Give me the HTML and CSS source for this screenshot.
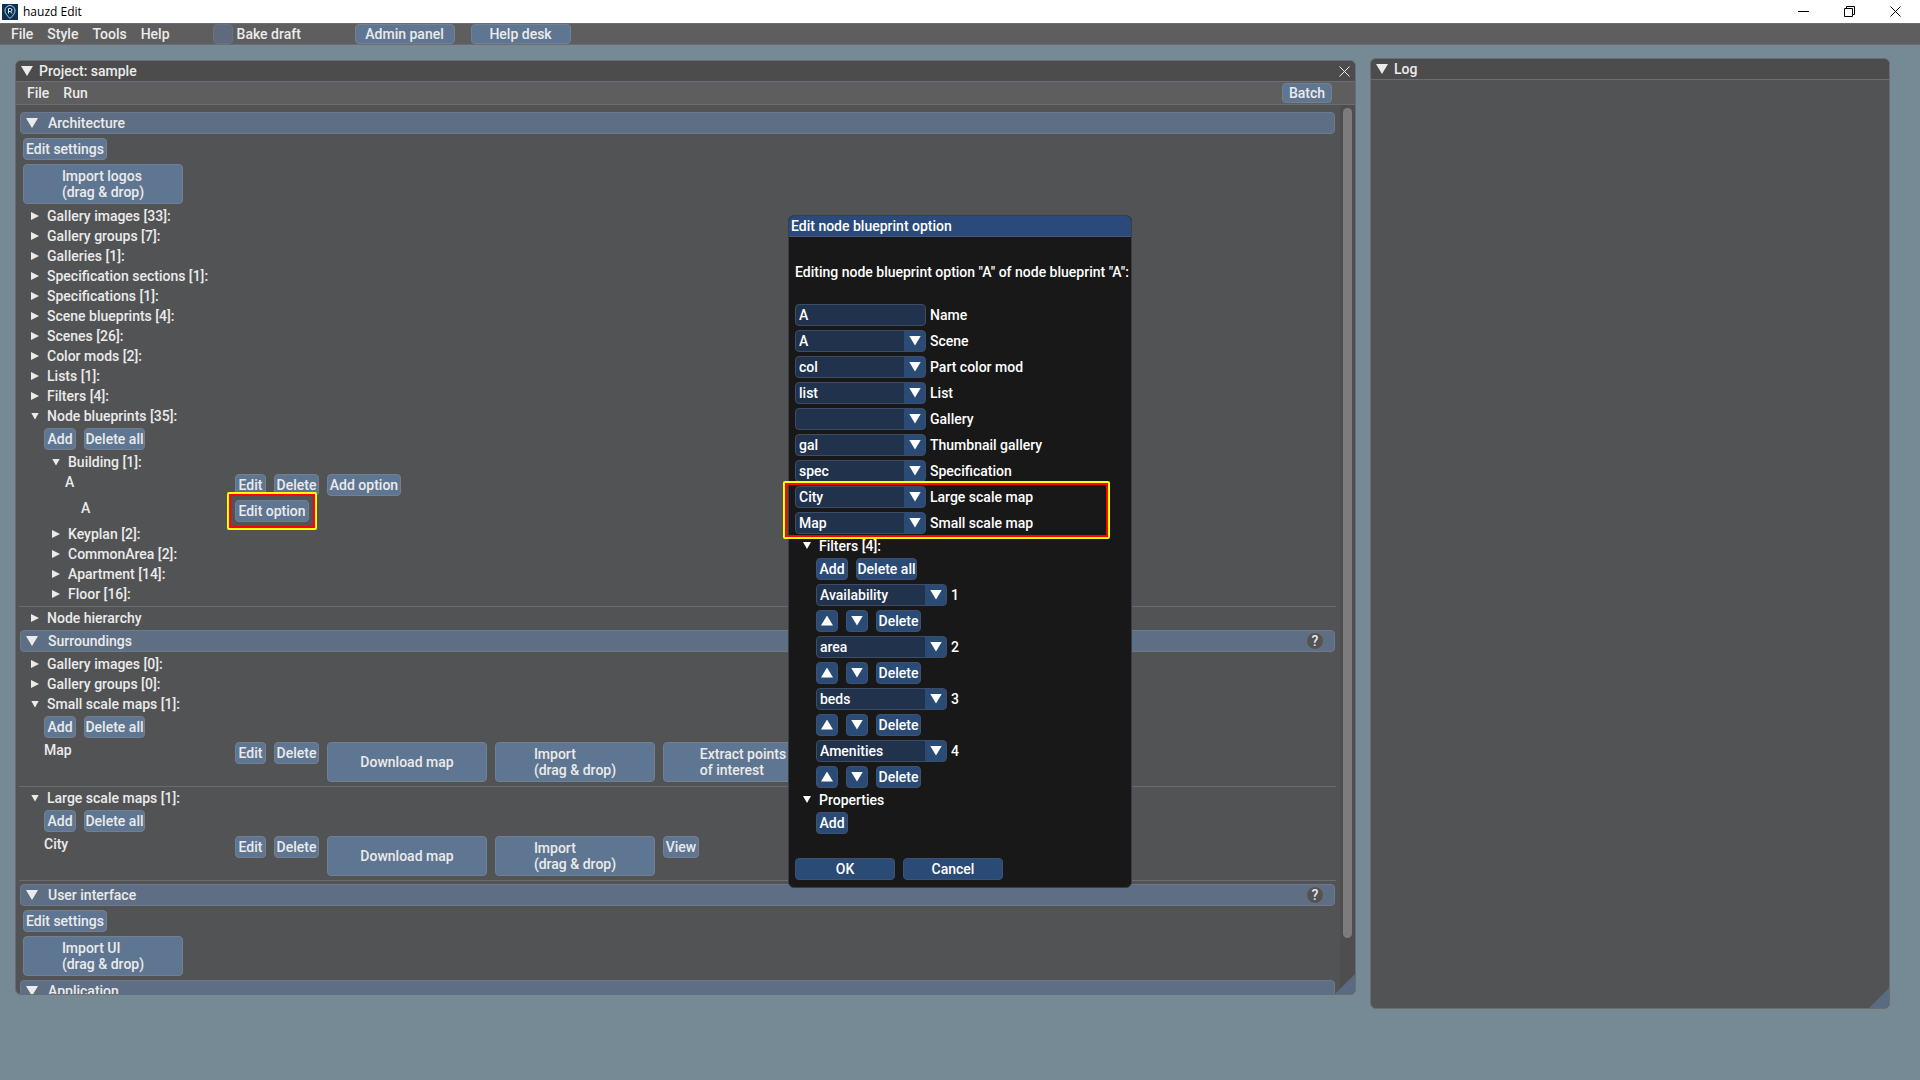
FILE: index.html
```html
<!DOCTYPE html>
<html lang="en">
<head>
<meta charset="utf-8">
<title>hauzd Edit</title>
<link rel="stylesheet" href="styles.css">
</head>
<body>
<header class="titlebar">
  <svg class="app-icon" viewBox="0 0 16 16" aria-hidden="true"><rect width="16" height="16" fill="#0b3155"/><path d="M8 14.500C5 11.500 3 9.500 3 6.500a5 5 0 0 1 10 0c0 3-2 5-5 8z" fill="none" stroke="#b9d3e4"/><path d="M6.500 9.500v-5h2a1.500 1.500 0 0 1 0 3h-2M8.500 7.500l1.500 2" fill="none" stroke="#dbe9f2"/></svg>
  <h1 class="app-name">hauzd Edit</h1>
  <div class="window-controls">
    <button class="window-control" aria-label="Minimize"><svg viewBox="0 0 11 11"><path d="M0 5.500h11"/></svg></button>
    <button class="window-control" aria-label="Restore"><svg viewBox="0 0 11 11"><path d="M.5 2.500h8v8h-8zM2.500 2.500v-2h8v8h-2"/></svg></button>
    <button class="window-control" aria-label="Close"><svg viewBox="0 0 11 11"><path d="M.5.5l10 10M10.500.5l-10 10"/></svg></button>
  </div>
</header>
<nav class="menubar">
  <button class="menu">File</button>
  <button class="menu">Style</button>
  <button class="menu">Tools</button>
  <button class="menu">Help</button>
  <label class="check"><input type="checkbox">Bake draft</label>
  <button class="btn bar-btn">Admin panel</button>
  <button class="btn bar-btn">Help desk</button>
</nav>
<main class="desktop">
  <section class="window project">
    <div class="window-title"><span class="arrow down"></span><h2>Project: sample</h2>
      <button class="close" aria-label="Close project"><svg viewBox="0 0 11 11"><path d="M.5.5l10 10M10.500.5l-10 10"/></svg></button>
    </div>
    <div class="window-menu">
      <button class="menu">File</button>
      <button class="menu">Run</button>
      <button class="btn batch">Batch</button>
    </div>
    <div class="scroll-area">
      <div class="content">
        <details class="section" open>
          <summary class="section-head"><span class="arrow down"></span>Architecture</summary>
          <div class="stack">
            <div class="row"><button class="btn settings">Edit settings</button></div>
            <div class="row"><button class="btn big"><span>Import logos<br>(drag &amp; drop)</span></button></div>
            <details><summary class="node">Gallery images [33]:</summary></details>
            <details><summary class="node">Gallery groups [7]:</summary></details>
            <details><summary class="node">Galleries [1]:</summary></details>
            <details><summary class="node">Specification sections [1]:</summary></details>
            <details><summary class="node">Specifications [1]:</summary></details>
            <details><summary class="node">Scene blueprints [4]:</summary></details>
            <details><summary class="node">Scenes [26]:</summary></details>
            <details><summary class="node">Color mods [2]:</summary></details>
            <details><summary class="node">Lists [1]:</summary></details>
            <details><summary class="node">Filters [4]:</summary></details>
            <details open><summary class="node">Node blueprints [35]:</summary>
              <div class="stack nested">
                <div class="row"><button class="btn add">Add</button><button class="btn delete-all">Delete all</button></div>
                <details open><summary class="node">Building [1]:</summary>
                  <div class="stack nested">
                    <div class="item"><span class="item-name">A</span><button class="btn edit">Edit</button><button class="btn delete">Delete</button><button class="btn option-btn">Add option</button></div>
                    <div class="item option"><span class="item-name">A</span><div class="marked"><button class="btn option-btn">Edit option</button></div></div>
                  </div>
                </details>
                <details><summary class="node">Keyplan [2]:</summary></details>
                <details><summary class="node">CommonArea [2]:</summary></details>
                <details><summary class="node">Apartment [14]:</summary></details>
                <details><summary class="node">Floor [16]:</summary></details>
              </div>
            </details>
            <hr>
            <details><summary class="node">Node hierarchy</summary></details>
          </div>
        </details>
        <details class="section" open>
          <summary class="section-head"><span class="arrow down"></span>Surroundings<button class="help" aria-label="About surroundings">?</button></summary>
          <div class="stack">
            <details><summary class="node">Gallery images [0]:</summary></details>
            <details><summary class="node">Gallery groups [0]:</summary></details>
            <details open><summary class="node">Small scale maps [1]:</summary>
              <div class="stack nested">
                <div class="row"><button class="btn add">Add</button><button class="btn delete-all">Delete all</button></div>
                <div class="item"><span class="item-name">Map</span><button class="btn edit">Edit</button><button class="btn delete">Delete</button><button class="btn big">Download map</button><button class="btn big"><span>Import<br>(drag &amp; drop)</span></button><button class="btn big"><span>Extract points<br>of interest</span></button></div>
              </div>
            </details>
            <hr>
            <details open><summary class="node">Large scale maps [1]:</summary>
              <div class="stack nested">
                <div class="row"><button class="btn add">Add</button><button class="btn delete-all">Delete all</button></div>
                <div class="item"><span class="item-name">City</span><button class="btn edit">Edit</button><button class="btn delete">Delete</button><button class="btn big">Download map</button><button class="btn big"><span>Import<br>(drag &amp; drop)</span></button><button class="btn view">View</button></div>
              </div>
            </details>
            <hr>
          </div>
        </details>
        <details class="section" open>
          <summary class="section-head"><span class="arrow down"></span>User interface<button class="help" aria-label="About user interface">?</button></summary>
          <div class="stack">
            <div class="row"><button class="btn settings">Edit settings</button></div>
            <div class="row"><button class="btn big"><span>Import UI<br>(drag &amp; drop)</span></button></div>
          </div>
        </details>
        <details class="section" open>
          <summary class="section-head"><span class="arrow down"></span>Application</summary>
        </details>
      </div>
      <div class="track"><div class="thumb"></div></div>
    </div>
    <span class="grip"></span>
  </section>
  <section class="window log">
    <div class="window-title"><span class="arrow down"></span><h2>Log</h2></div>
    <span class="grip"></span>
  </section>
</main>
<div class="overlay">
  <form class="dialog" role="dialog" aria-labelledby="dialog-title">
    <h2 class="dialog-title" id="dialog-title">Edit node blueprint option</h2>
    <div class="dialog-body">
      <p class="intro">Editing node blueprint option "A" of node blueprint "A":</p>
      <div class="field"><input class="text" id="name" value="A"><label for="name">Name</label></div>
      <div class="field"><div class="combo"><select id="scene"><option>A</option></select></div><label for="scene">Scene</label></div>
      <div class="field"><div class="combo"><select id="mod"><option>col</option></select></div><label for="mod">Part color mod</label></div>
      <div class="field"><div class="combo"><select id="list"><option>list</option></select></div><label for="list">List</label></div>
      <div class="field"><div class="combo"><select id="gallery"><option></option></select></div><label for="gallery">Gallery</label></div>
      <div class="field"><div class="combo"><select id="thumb"><option>gal</option></select></div><label for="thumb">Thumbnail gallery</label></div>
      <div class="field"><div class="combo"><select id="spec"><option>spec</option></select></div><label for="spec">Specification</label></div>
      <div class="stack marked maps">
        <div class="field"><div class="combo"><select id="large"><option>City</option></select></div><label for="large">Large scale map</label></div>
        <div class="field"><div class="combo"><select id="small"><option>Map</option></select></div><label for="small">Small scale map</label></div>
      </div>
      <details open><summary class="node">Filters [4]:</summary>
        <div class="stack nested">
          <div class="row"><button type="button" class="btn add">Add</button><button type="button" class="btn delete-all">Delete all</button></div>
          <div class="field"><div class="combo"><select id="f1"><option>Availability</option></select></div><label for="f1">1</label></div>
          <div class="row"><button type="button" class="btn move" aria-label="Move up"><span class="arrow up"></span></button><button type="button" class="btn move" aria-label="Move down"><span class="arrow down"></span></button><button type="button" class="btn delete">Delete</button></div>
          <div class="field"><div class="combo"><select id="f2"><option>area</option></select></div><label for="f2">2</label></div>
          <div class="row"><button type="button" class="btn move" aria-label="Move up"><span class="arrow up"></span></button><button type="button" class="btn move" aria-label="Move down"><span class="arrow down"></span></button><button type="button" class="btn delete">Delete</button></div>
          <div class="field"><div class="combo"><select id="f3"><option>beds</option></select></div><label for="f3">3</label></div>
          <div class="row"><button type="button" class="btn move" aria-label="Move up"><span class="arrow up"></span></button><button type="button" class="btn move" aria-label="Move down"><span class="arrow down"></span></button><button type="button" class="btn delete">Delete</button></div>
          <div class="field"><div class="combo"><select id="f4"><option>Amenities</option></select></div><label for="f4">4</label></div>
          <div class="row"><button type="button" class="btn move" aria-label="Move up"><span class="arrow up"></span></button><button type="button" class="btn move" aria-label="Move down"><span class="arrow down"></span></button><button type="button" class="btn delete">Delete</button></div>
        </div>
      </details>
      <details open><summary class="node">Properties</summary>
        <div class="stack nested"><div class="row"><button type="button" class="btn add">Add</button></div></div>
      </details>
      <div class="row actions"><button type="button" class="btn">OK</button><button type="button" class="btn">Cancel</button></div>
    </div>
  </form>
</div>
</body>
</html>
```

FILE: styles.css
```css
:root {
  --desk: #758a94;
  --window: #525355;
  --title: #4c4c4c;
  --bar: #5e5e5e;
  --line: #6c6c74;
  --btn: #5f7692;
  --btn-line: #74808f;
  --head: #5e6e84;
  --text: #ebebeb;
}

* { box-sizing: border-box; }

body {
  margin: 0;
  height: 100vh;
  display: flex;
  flex-direction: column;
  overflow: hidden;
  background: var(--desk);
  color: var(--text);
  font: 500 14px/16px Roboto, sans-serif;
}

h1, h2, p { margin: 0; font: inherit; }

button, input, select { font: inherit; color: inherit; }

button { cursor: pointer; white-space: nowrap; }

summary { list-style: none; cursor: pointer; }

/* Application title bar */
.titlebar {
  display: flex;
  align-items: center;
  height: 23px;
  padding: 0 2px;
  background: #fff;
  color: #000;
}

.app-icon { width: 16px; height: 16px; }

.app-name { margin-left: 5px; font: 400 12px/16px "Open Sans", sans-serif; }

.window-controls { display: flex; margin-left: auto; }

.window-control {
  display: grid;
  place-items: center;
  width: 46px;
  height: 20px;
  padding: 0;
  border: 0;
  background: none;
}

.window-control svg, .close svg {
  width: 11px;
  height: 11px;
  fill: none;
  stroke: #000;
}

/* Menus */
.menubar {
  display: flex;
  align-items: center;
  height: 22px;
  padding-left: 11px;
  border: solid var(--line);
  border-width: 1px 0;
  background: var(--bar);
}

.menu {
  margin-right: 14px;
  padding: 0;
  border: 0;
  background: none;
}

.check {
  display: flex;
  align-items: center;
  gap: 4px;
  width: 142px;
  margin-left: 29px;
}

.check input {
  appearance: none;
  width: 20px;
  height: 20px;
  margin: 0;
  border: 1px solid #6a7180;
  border-radius: 4px;
  background: #5f6a7e;
}

.btn {
  height: 22px;
  padding: 0;
  border: 1px solid var(--btn-line);
  border-radius: 4px;
  background: var(--btn);
}

.bar-btn { width: 100px; height: 20px; margin-right: 16px; }

.add { width: 32px; }

.edit { width: 31px; }

.view { width: 36px; }

.delete { width: 45px; }

.delete-all { width: 61px; }

.option-btn { width: 74px; }

.settings { width: 84px; }

.big {
  display: grid;
  place-items: center;
  width: 160px;
  height: 40px;
  text-align: left;
}

/* Windows */
.desktop {
  flex: 1;
  min-height: 0;
  display: grid;
  grid-template-columns: 1341fr 520fr;
  gap: 14px;
  padding: 13px 30px 71px 15px;
}

.window {
  position: relative;
  display: flex;
  flex-direction: column;
  min-height: 0;
  border: 1px solid var(--line);
  border-radius: 6px;
  background: var(--window);
  overflow: hidden;
}

.project { margin: 2px 0 14px; }

.window-title {
  display: flex;
  align-items: center;
  flex: none;
  gap: 6px;
  height: 21px;
  padding: 0 5px;
  border-bottom: 1px solid var(--line);
  background: var(--title);
}

.close {
  margin-left: auto;
  padding: 0;
  border: 0;
  background: none;
  line-height: 0;
}

.close svg { stroke: var(--text); }

.window-menu {
  display: flex;
  align-items: center;
  flex: none;
  height: 23px;
  padding: 0 23px 0 11px;
  border-bottom: 1px solid var(--line);
  background: var(--bar);
}

.batch { width: 50px; height: 20px; margin-left: auto; }

.scroll-area { display: flex; flex: 1; min-height: 0; }

.content {
  flex: 1;
  display: flex;
  flex-direction: column;
  gap: 4px;
  padding: 7px 5px 0 4px;
  overflow: auto;
  scrollbar-width: none;
}

.track {
  width: 15px;
  padding: 3px 3px 56px;
  background: #4e4e4f;
}

.thumb { height: 100%; border-radius: 5px; background: #7c7c7c; }

.grip {
  position: absolute;
  right: 0;
  bottom: 0;
  width: 20px;
  height: 20px;
  background: #596b80;
  clip-path: polygon(100% 0, 100% 100%, 0 100%);
}

/* Arrows */
.arrow { flex: none; width: 12px; height: 10px; background: currentColor; }

.down { clip-path: polygon(0 0, 100% 0, 50% 100%); }

.up { clip-path: polygon(50% 0, 100% 100%, 0 100%); }

/* Sections and tree */
.section-head {
  display: flex;
  align-items: center;
  gap: 10px;
  height: 22px;
  padding: 0 10px 0 5px;
  border: 1px solid #6d7a8d;
  border-radius: 4px;
  background: var(--head);
}

.help {
  width: 18px;
  height: 18px;
  margin-left: auto;
  padding: 0;
  border: 1px solid #6d7078;
  border-radius: 9px;
  background: #525355;
  line-height: 16px;
}

.stack { display: flex; flex-direction: column; gap: 4px; }

.section > .stack { margin-top: 4px; padding-left: 3px; }

.nested { margin-top: 4px; padding-left: 21px; }

.node { display: flex; align-items: center; gap: 8px; padding-left: 8px; }

.node::before {
  content: "";
  width: 8px;
  height: 8px;
  background: currentColor;
  clip-path: polygon(0 0, 100% 50%, 0 100%);
}

details[open] > .node::before {
  height: 7px;
  clip-path: polygon(0 0, 100% 0, 50% 100%);
}

.row { display: flex; gap: 8px; }

.item { display: flex; align-items: flex-start; gap: 8px; }

.item-name { width: 183px; }

.nested .nested .item-name { width: 162px; }

.option { padding-left: 16px; }

.nested .nested .option .item-name { width: 146px; }

hr {
  width: calc(100% + 5px);
  height: 1px;
  margin: 0 0 -1px -4px;
  border: 0;
  background: #6c6c70;
}

/* Marker drawn round the controls being pointed out */
.marked { position: relative; }

.marked::after {
  content: "";
  position: absolute;
  inset: -8px;
  border: 2px solid #ff0;
  border-radius: 2px;
  box-shadow: inset 0 0 0 2px #f00;
  pointer-events: none;
}

/* Dialog */
.overlay {
  position: absolute;
  inset: 22px 0 0;
  display: grid;
  place-items: center;
}

.dialog {
  --btn: #294b75;
  --btn-line: #3f5170;
  width: 344px;
  border: 1px solid #3c3c44;
  border-radius: 6px;
  background: #181818;
  color: #fff;
}

.dialog-title {
  height: 21px;
  padding: 2px;
  border-bottom: 1px solid #46577a;
  border-radius: 5px 5px 0 0;
  background: #294a7a;
}

.dialog-body {
  display: flex;
  flex-direction: column;
  gap: 4px;
  padding: 27px 6px 7px;
}

.intro { margin-bottom: 20px; white-space: nowrap; }

.field { display: flex; align-items: center; gap: 4px; }

.text, .combo select {
  appearance: none;
  width: 131px;
  height: 22px;
  padding: 0 3px;
  border: 1px solid #3f4c66;
  border-radius: 4px;
  background: #21324d;
}

.combo { position: relative; display: flex; }

.combo select {
  background: linear-gradient(to left, #294b75 21px, #21324d 21px);
}

.combo::after {
  content: "";
  position: absolute;
  top: 6px;
  right: 5px;
  width: 12px;
  height: 10px;
  background: #fff;
  clip-path: polygon(0 0, 100% 0, 50% 100%);
  pointer-events: none;
}

.maps { width: 308px; }

.maps::after { inset: -5px -7px -5px -12px; }

.move { display: grid; place-items: center; width: 22px; }

.actions { margin-top: 20px; }

.actions .btn { width: 100px; }
```
